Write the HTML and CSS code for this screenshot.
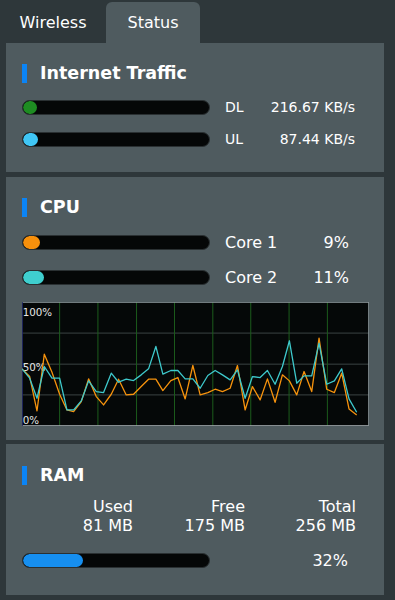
FILE: index.html
```html
<!DOCTYPE html>
<html lang="en">
<head>
    <meta charset="UTF-8">
    <meta name="viewport" content="width=device-width, initial-scale=1.0">
    <title>Status</title>
    <link rel="stylesheet" href="styles.css">
</head>
<body>
    <!-- Tabs -->
    <div class="tabs">
        <div class="tab">Wireless</div>
        <div class="tab active">Status</div>
    </div>

    <!-- Internet Traffic -->
    <div class="panel traffic">
        <div class="panel-title"><span class="accent"></span>Internet Traffic</div>
        <div class="row">
            <div class="track"><div class="fill dl" style="width: 14px"></div></div>
            <span class="label">DL</span>
            <span class="value">216.67 KB/s</span>
        </div>
        <div class="row">
            <div class="track"><div class="fill ul" style="width: 15px"></div></div>
            <span class="label">UL</span>
            <span class="value">87.44 KB/s</span>
        </div>
    </div>

    <!-- CPU -->
    <div class="panel cpu">
        <div class="panel-title"><span class="accent"></span>CPU</div>
        <div class="row">
            <div class="track"><div class="fill core1" style="width: 17px"></div></div>
            <span class="label">Core 1</span>
            <span class="value">9%</span>
        </div>
        <div class="row">
            <div class="track"><div class="fill core2" style="width: 21px"></div></div>
            <span class="label">Core 2</span>
            <span class="value">11%</span>
        </div>
        <svg class="chart" width="347" height="124" viewBox="65 22 1042 371" preserveAspectRatio="none">
            <rect x="65" y="22" width="1042" height="371" fill="#050808"/>
            <g stroke="#3b4444" vector-effect="non-scaling-stroke">
                <line x1="65" y1="115" x2="1107" y2="115" vector-effect="non-scaling-stroke"/>
                <line x1="65" y1="208" x2="1107" y2="208" vector-effect="non-scaling-stroke"/>
                <line x1="65" y1="300" x2="1107" y2="300" vector-effect="non-scaling-stroke"/>
            </g>
            <g stroke="#1c5c1c">
                <line x1="178" y1="22" x2="178" y2="393" vector-effect="non-scaling-stroke"/>
                <line x1="293" y1="22" x2="293" y2="393" vector-effect="non-scaling-stroke"/>
                <line x1="409" y1="22" x2="409" y2="393" vector-effect="non-scaling-stroke"/>
                <line x1="523" y1="22" x2="523" y2="393" vector-effect="non-scaling-stroke"/>
                <line x1="638" y1="22" x2="638" y2="393" vector-effect="non-scaling-stroke"/>
                <line x1="752" y1="22" x2="752" y2="393" vector-effect="non-scaling-stroke"/>
                <line x1="867" y1="22" x2="867" y2="393" vector-effect="non-scaling-stroke"/>
                <line x1="982" y1="22" x2="982" y2="393" vector-effect="non-scaling-stroke"/>
            </g>
            <line x1="65" y1="23" x2="1107" y2="23" stroke="#8a9598" vector-effect="non-scaling-stroke"/>
            <line x1="65" y1="392" x2="1107" y2="392" stroke="#a0a8ab" vector-effect="non-scaling-stroke"/>
            <line x1="66" y1="22" x2="66" y2="393" stroke="#232a6a" vector-effect="non-scaling-stroke"/>
            <line x1="1106" y1="22" x2="1106" y2="393" stroke="#8a9598" vector-effect="non-scaling-stroke"/>
            <text x="67" y="64" class="axis">100%</text>
            <text x="67" y="228" class="axis">50%</text>
            <text x="67" y="388" class="axis">0%</text>
            <polyline fill="none" stroke="#f7930d" stroke-width="1.3" vector-effect="non-scaling-stroke" stroke-linejoin="round"
                points="65,222 88,245 110,348 132,178 155,232 178,298 200,345 220,350 243,320 265,252 288,305 310,330 333,298 355,253 378,300 400,298 423,275 445,253 467,253 488,287 512,257 533,248 555,312 578,212 600,300 623,293 645,283 667,290 690,280 712,212 735,345 757,275 780,315 802,252 825,322 847,240 868,258 890,300 912,230 935,290 957,130 980,283 1003,293 1025,235 1047,342 1070,360"/>
            <polyline fill="none" stroke="#3ec9cc" stroke-width="1.3" vector-effect="non-scaling-stroke" stroke-linejoin="round"
                points="65,222 88,250 110,310 132,215 155,250 178,250 200,345 220,345 243,318 265,258 288,290 310,293 333,235 355,262 378,253 400,257 423,240 445,222 467,155 488,238 512,227 533,227 555,252 578,252 600,280 623,242 645,227 667,240 690,255 712,225 735,310 757,245 780,248 802,227 825,268 847,215 868,138 890,265 912,243 935,243 957,145 980,268 1003,258 1025,222 1047,312 1070,352"/>
        </svg>
    </div>

    <!-- RAM -->
    <div class="panel ram">
        <div class="panel-title"><span class="accent"></span>RAM</div>
        <div class="stats">
            <div>Used<br>81 MB</div>
            <div>Free<br>175 MB</div>
            <div>Total<br>256 MB</div>
        </div>
        <div class="row">
            <div class="track"><div class="fill mem" style="width: 60px"></div></div>
            <span class="value">32%</span>
        </div>
    </div>
</body>
</html>
```

FILE: styles.css
```css
body {
    margin: 0;
    background-color: #2e373a;
    color: #fff;
    font-family: 'DejaVu Sans', Verdana, sans-serif;
    font-size: 16px;
}

.tabs {
    display: flex;
    padding-top: 2px;
    height: 41px;
}

.tab {
    width: 106px;
    line-height: 41px;
    text-align: center;
    border-radius: 6px 6px 0 0;
}

.tab.active {
    width: 94px;
    background-color: #4f5b5f;
}

.panel {
    background-color: #4f5b5f;
    margin: 0 11px 0 6px;
    padding: 20px 0 0 16px;
    box-sizing: border-box;
}

.panel.traffic {
    height: 129px;
    margin-bottom: 5px;
}

.panel.cpu {
    height: 263px;
    margin-bottom: 4px;
}

.panel.ram {
    height: 151px;
    padding-top: 21px;
}

.panel-title {
    display: flex;
    align-items: center;
    height: 20px;
    font-size: 17.5px;
    font-weight: bold;
}

.accent {
    width: 5px;
    height: 19px;
    background-color: #0b84f5;
    margin-right: 13px;
}

.row {
    display: flex;
    align-items: center;
    width: 333px;
}

.traffic .row {
    height: 32px;
    font-size: 14px;
}

.traffic .panel-title {
    margin-bottom: 8px;
}

.cpu .panel-title {
    margin-bottom: 8px;
}

.cpu .row {
    height: 35px;
    width: 327px;
}

.track {
    width: 188px;
    height: 15px;
    box-sizing: border-box;
    background-color: #050707;
    border: 1px solid #2a3032;
    border-radius: 8px;
    overflow: hidden;
}

.fill {
    height: 100%;
    border-radius: 7px;
}

.fill.dl { background-color: #1e8c22; }
.fill.ul { background-color: #40c6f5; }
.fill.core1 { background-color: #f7900c; }
.fill.core2 { background-color: #3fcfcf; }
.fill.mem { background-color: #168ff0; }

.label {
    margin-left: 15px;
}

.value {
    margin-left: auto;
}

.chart {
    display: block;
    margin-top: 7px;
}

.axis {
    fill: #e6e6e6;
    font-size: 31px;
    font-family: 'DejaVu Sans', sans-serif;
}

.stats {
    display: grid;
    grid-template-columns: 111px 112px 111px;
    text-align: right;
    line-height: 19px;
    margin-top: 12px;
}

.ram .row {
    height: 32px;
    width: 326px;
    margin-top: 9px;
}
```
